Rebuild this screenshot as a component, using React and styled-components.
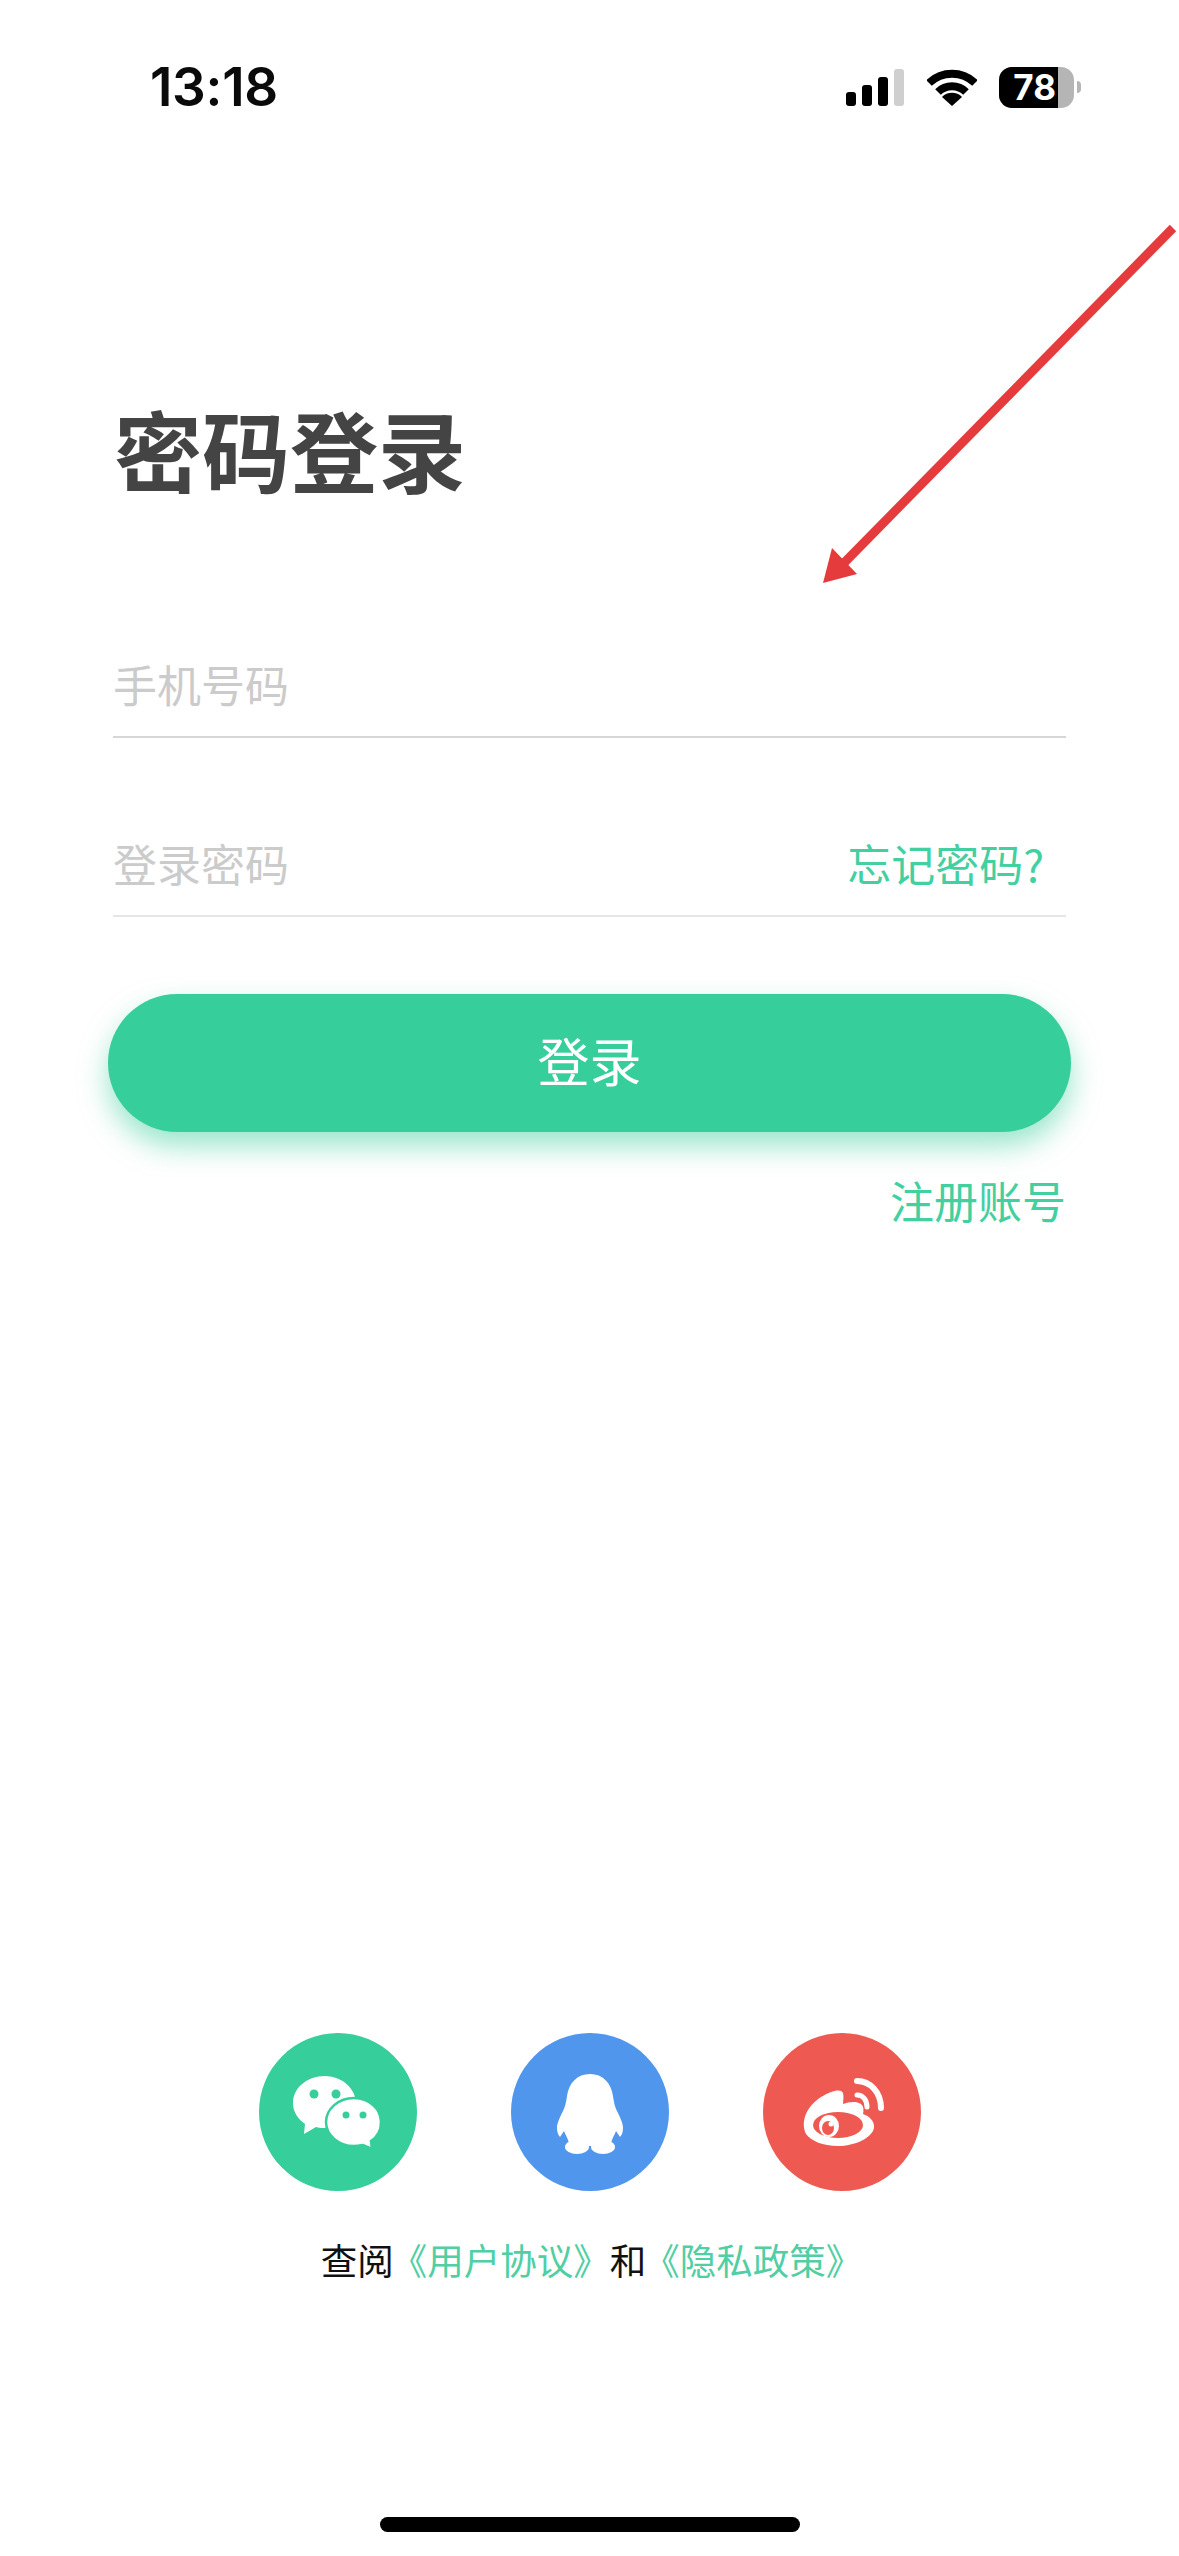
import React from "react";
import styled, { createGlobalStyle } from "styled-components";

const CJK = `"Noto Sans CJK SC", "Noto Sans", sans-serif`;
const GREEN = "#36ce9a";

const Global = createGlobalStyle`
  html, body { margin: 0; padding: 0; background: #fff; }
  * { box-sizing: border-box; }
`;

const Page = styled.main`
  position: relative;
  width: 1179px;
  height: 2556px;
  display: flex;
  flex-direction: column;
  overflow: hidden;
  background: #fff;
  font-family: ${CJK};
`;

const StatusBar = styled.header`
  height: 54px;
  margin-top: 60px;
  padding: 0 98px 0 150px;
  display: flex;
  align-items: center;
  justify-content: space-between;
`;

const Time = styled.span`
  font-family: Inter, "Liberation Sans", sans-serif;
  font-size: 53px;
  font-weight: 600;
  letter-spacing: -0.3px;
  color: #0a0a0a;
`;

const StatusIcons = styled.div`
  display: flex;
  align-items: center;
`;

const Signal = styled.div`
  display: flex;
  align-items: flex-end;
  gap: 6px;
  height: 37px;
  margin-right: 23px;
`;

const Bar = styled.i`
  display: block;
  width: 10px;
  height: ${(p) => p.$h}px;
  border-radius: 3px;
  background: ${(p) => (p.$off ? "#cfcfcf" : "#000")};
`;

const WifiIcon = styled.svg`
  display: block;
  width: 50px;
  height: 37px;
  margin-right: 22px;
`;

const Battery = styled.div`
  display: flex;
  width: 75px;
  height: 41px;
  border-radius: 13px;
  overflow: hidden;
  background: #b5b5b5;
`;

const BatteryLevel = styled.div`
  width: 59px;
  height: 100%;
  padding-right: 2px;
  display: flex;
  align-items: center;
  justify-content: flex-end;
  background: #000;
  color: #fff;
  font-family: Inter, "Liberation Sans", sans-serif;
  font-size: 35px;
  font-weight: 700;
`;

const BatteryNub = styled.i`
  display: block;
  width: 4px;
  height: 12px;
  margin-left: 3px;
  border-radius: 0 4px 4px 0;
  background: #b5b5b5;
`;

const Title = styled.h1`
  margin: 289px 0 0 114px;
  font-size: 88px;
  line-height: 90px;
  font-weight: 700;
  color: #444;
`;

const Form = styled.section`
  margin: 141px 113px 0;
  display: flex;
  flex-direction: column;
`;

const Field = styled.div`
  height: 104px;
  margin-bottom: ${(p) => (p.$last ? 0 : 75)}px;
  padding: 0 22px 3px 0;
  display: flex;
  align-items: center;
  justify-content: space-between;
  border-bottom: 2px solid ${(p) => (p.$last ? "#e6e6e6" : "#d6d6d6")};
  font-size: 44px;
`;

const Placeholder = styled.span`
  color: #cbcbcb;
`;

const GreenLink = styled.a`
  color: #42d0a0;
  font-size: 44px;
  line-height: 60px;
`;

const LoginButton = styled.button`
  height: 138px;
  margin: 77px -5px 0;
  padding: 0 0 7px;
  border: 0;
  border-radius: 69px;
  background: ${GREEN};
  color: #fff;
  font-family: ${CJK};
  font-size: 52px;
  box-shadow: 0 14px 28px rgba(54, 206, 154, 0.5);
`;

const RegisterRow = styled.div`
  margin-top: 38px;
  display: flex;
  justify-content: flex-end;
`;

const Footer = styled.footer`
  margin-top: auto;
  padding-bottom: 24px;
  display: flex;
  flex-direction: column;
  align-items: center;
`;

const Socials = styled.div`
  display: flex;
  gap: 94px;
`;

const SocialButton = styled.button`
  width: 158px;
  height: 158px;
  padding: 0;
  border: 0;
  border-radius: 50%;
  background: ${(p) => p.$bg};
`;

const SocialIcon = styled.svg`
  display: block;
  width: 158px;
  height: 158px;
`;

const Terms = styled.p`
  margin: 44px 0 0;
  padding-left: 4px;
  font-size: 36.5px;
  line-height: 50px;
  color: #111;
  white-space: nowrap;
`;

const TermsLink = styled.span`
  margin-left: -3px;
  color: #4fcfa3;
`;

const HomeBar = styled.div`
  width: 420px;
  height: 15px;
  margin-top: 232px;
  border-radius: 8px;
  background: #000;
`;

const ArrowLayer = styled.svg`
  position: absolute;
  left: 0;
  top: 0;
  width: 1179px;
  height: 700px;
  pointer-events: none;
`;

const Wechat = () => (
  <SocialIcon viewBox="0 0 158 158">
    <path fill="#fff" d="M66 43c-18 0-32 12-32 27 0 9 5 16 12 21l-1 10 12-7c3 1 6 1 9 1 18 0 31-12 31-25S84 43 66 43z" />
    <circle cx="55" cy="61" r="4.5" fill={GREEN} />
    <circle cx="77" cy="61" r="4.5" fill={GREEN} />
    <path fill="#fff" stroke={GREEN} strokeWidth="2.5" d="M95 65c-15.500 0-28 11-28 24s12.500 24 28 24c3 0 6-.5 9-1l9 4-1-8c7-4.500 10-11.500 10-19 0-13-12-24-27-24z" />
    <circle cx="87" cy="82" r="3.500" fill={GREEN} />
    <circle cx="104" cy="82" r="3.500" fill={GREEN} />
  </SocialIcon>
);

const QQ = () => (
  <SocialIcon viewBox="0 0 158 158">
    <path fill="#fff" d="M79 41C66 41 58 50 56 63c-1 7-2 11-4 15-3 6-6 12-6 17 0 4 1 7 3 9l4-6c1 3 3 6 4 9l2 6h40l2-6c1-3 3-6 4-9l4 6c2-2 3-5 3-9 0-5-3-11-6-17-2-4-3-8-4-15-2-13-10-22-23-22z" />
    <ellipse cx="66" cy="114" rx="12" ry="7" fill="#fff" />
    <ellipse cx="92" cy="114" rx="12" ry="7" fill="#fff" />
  </SocialIcon>
);

const Weibo = () => (
  <SocialIcon viewBox="0 0 158 158">
    <path fill="#fff" d="M43 101C37 88 44 73 58 64c10-6 20-9 22-4 1 4 0 8 0 11 8-3 18-3 20 3 1 3 0 6 0 7 6 2 12 7 11 14-2 10-19 18-36 18-15 0-27-5-32-12z" />
    <ellipse cx="75" cy="92" rx="25" ry="13" fill="#ee5a52" />
    <ellipse cx="66" cy="93" rx="10" ry="11" fill="#fff" />
    <ellipse cx="65" cy="95" rx="6" ry="7" fill="#ee5a52" />
    <circle cx="68" cy="91" r="2.500" fill="#fff" />
    <g fill="none" stroke="#fff" strokeLinecap="round">
      <path strokeWidth="6" d="M94 48c13 0 24 11 24 27" />
      <path strokeWidth="5" d="M94 62c6 0 10 5 10 12" />
    </g>
  </SocialIcon>
);

export default function App() {
  return (
    <Page>
      <Global />
      <StatusBar>
        <Time>13:18</Time>
        <StatusIcons>
          <Signal>
            <Bar $h={14} />
            <Bar $h={21} />
            <Bar $h={29} />
            <Bar $h={37} $off />
          </Signal>
          <WifiIcon viewBox="0 0 50 37">
            <g fill="none" stroke="#000">
              <path strokeWidth="8" d="M2 14A33 33 0 0 1 48 14" />
              <path strokeWidth="8" d="M11 23A20 20 0 0 1 39 23" />
            </g>
            <path d="M25 37 15 28A14 14 0 0 1 35 28Z" fill="#000" />
          </WifiIcon>
          <Battery>
            <BatteryLevel>78</BatteryLevel>
          </Battery>
          <BatteryNub />
        </StatusIcons>
      </StatusBar>

      <Title>密码登录</Title>

      <Form>
        <Field>
          <Placeholder>手机号码</Placeholder>
        </Field>
        <Field $last>
          <Placeholder>登录密码</Placeholder>
          <GreenLink>忘记密码?</GreenLink>
        </Field>
        <LoginButton>登录</LoginButton>
        <RegisterRow>
          <GreenLink>注册账号</GreenLink>
        </RegisterRow>
      </Form>

      <Footer>
        <Socials>
          <SocialButton $bg={GREEN} aria-label="微信"><Wechat /></SocialButton>
          <SocialButton $bg="#5096ec" aria-label="QQ"><QQ /></SocialButton>
          <SocialButton $bg="#ee5a52" aria-label="微博"><Weibo /></SocialButton>
        </Socials>
        <Terms>
          查阅<TermsLink>《用户协议》</TermsLink>和<TermsLink>《隐私政策》</TermsLink>
        </Terms>
        <HomeBar />
      </Footer>

      <ArrowLayer viewBox="0 0 1179 700">
        <path d="M1173 228 842 565" stroke="#e63b3d" strokeWidth="9" fill="none" />
        <path d="M823 583 832 548 857 574Z" fill="#e63b3d" />
      </ArrowLayer>
    </Page>
  );
}
